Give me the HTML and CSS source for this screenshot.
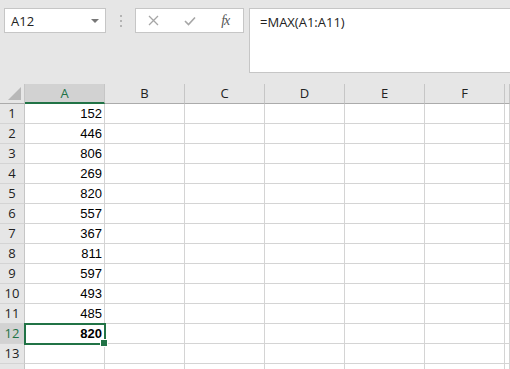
FILE: index.html
```html
<!DOCTYPE html>
<html lang="en">
<head>
    <meta charset="UTF-8">
    <meta name="viewport" content="width=device-width, initial-scale=1.0">
    <title>Book1 - Excel</title>
    <link rel="stylesheet" href="styles.css">
</head>
<body>

<div class="toolbar">
    <div class="namebox">
        <span>A12</span>
        <span class="caret"></span>
    </div>
    <div class="grip"><i></i><i></i><i></i></div>
    <div class="fxbox">
        <span class="fx-btn">
            <svg width="11" height="11" viewBox="0 0 11 11"><path d="M1 1L10 10M10 1L1 10" stroke="#a6a6a6" stroke-width="1.3" fill="none"/></svg>
        </span>
        <span class="fx-btn">
            <svg width="12" height="10" viewBox="0 0 12 10"><path d="M1 5L4.5 8.5L11 1.5" stroke="#a6a6a6" stroke-width="1.6" fill="none"/></svg>
        </span>
        <span class="fx-btn fx-label">fx</span>
    </div>
    <div class="formula">=MAX(A1:A11)</div>
</div>

<div class="sheet" id="sheet">
    <div class="corner">
        <svg width="13" height="13" viewBox="0 0 13 13"><path d="M13 0L13 13L0 13Z" fill="#b8b8b8"/></svg>
    </div>
    <div class="colhead active">A</div>
    <div class="colhead">B</div>
    <div class="colhead">C</div>
    <div class="colhead">D</div>
    <div class="colhead">E</div>
    <div class="colhead">F</div>
    <div class="colhead"></div>
</div>

<script>
    const values = [152, 446, 806, 269, 820, 557, 367, 811, 597, 493, 485, 820];
    const sheet = document.getElementById('sheet');

    // 13 numbered rows, plus the top sliver of the next one
    for (let r = 1; r <= 14; r++) {
        const head = document.createElement('div');
        head.className = 'rowhead' + (r === 12 ? ' active' : '');
        if (r <= 13) head.textContent = r;
        sheet.appendChild(head);

        for (let c = 0; c < 7; c++) {
            const cell = document.createElement('div');
            cell.className = 'cell';
            if (c === 0 && values[r - 1] !== undefined) {
                cell.textContent = values[r - 1];
            }
            if (c === 0 && r === 12) {
                cell.classList.add('selected');
            }
            sheet.appendChild(cell);
        }
    }
</script>

</body>
</html>
```

FILE: styles.css
```css
* {
    box-sizing: border-box;
}
body {
    margin: 0;
    background: #e6e6e6;
    font-family: 'Open Sans', 'Liberation Sans', sans-serif;
    overflow: hidden;
    width: 510px;
    height: 369px;
}
.toolbar {
    height: 84px;
    padding: 8px 0 0 4px;
    display: flex;
    align-items: flex-start;
}
.namebox {
    width: 102px;
    height: 25px;
    background: #fff;
    border: 1px solid #c6c6c6;
    display: flex;
    align-items: center;
    justify-content: space-between;
    padding: 0 6px 0 6px;
    font-size: 13px;
    color: #222;
}
.caret {
    width: 0;
    height: 0;
    border-left: 4px solid transparent;
    border-right: 4px solid transparent;
    border-top: 4px solid #777;
}
.grip {
    margin: 7px 13px 0 14px;
    display: flex;
    flex-direction: column;
    gap: 3px;
}
.grip i {
    display: block;
    width: 2px;
    height: 2px;
    background: #b4b4b4;
}
.fxbox {
    width: 109px;
    height: 25px;
    background: #fff;
    border: 1px solid #c6c6c6;
    display: flex;
    align-items: center;
}
.fx-btn {
    width: 36px;
    display: flex;
    justify-content: center;
    align-items: center;
}
.fx-label {
    font-family: 'Liberation Serif', serif;
    font-style: italic;
    font-size: 14px;
    color: #555;
    letter-spacing: -1px;
}
.formula {
    flex: 1;
    height: 65px;
    margin-left: 5px;
    background: #fff;
    border: 1px solid #c6c6c6;
    border-right: none;
    padding: 4px 10px;
    font-size: 13px;
    color: #222;
}
.sheet {
    display: grid;
    grid-template-columns: 25px repeat(6, 80px) 1fr;
    grid-auto-rows: 20px;
    background: #fff;
}
.corner {
    background: #e6e6e6;
    border-right: 1px solid #c6c6c6;
    border-bottom: 1px solid #ababab;
    display: flex;
    justify-content: flex-end;
    align-items: flex-end;
    padding: 0 3px 3px 0;
}
.colhead {
    background: #e6e6e6;
    border-right: 1px solid #c6c6c6;
    border-bottom: 1px solid #ababab;
    text-align: center;
    font-size: 13px;
    line-height: 19px;
    color: #222;
}
.colhead.active {
    background: #d2d2d2;
    color: #217346;
    border-bottom: 2px solid #217346;
}
.rowhead {
    background: #e6e6e6;
    border-right: 1px solid #c6c6c6;
    border-bottom: 1px solid #d4d4d4;
    text-align: center;
    font-size: 13px;
    line-height: 19px;
    color: #222;
}
.rowhead.active {
    background: #d2d2d2;
    color: #217346;
}
.cell {
    border-right: 1px solid #d4d4d4;
    border-bottom: 1px solid #d4d4d4;
    font-family: 'Liberation Sans', Arial, sans-serif;
    font-size: 13px;
    line-height: 20px;
    text-align: right;
    padding-right: 2px;
    color: #000;
}
.cell.selected {
    position: relative;
    font-weight: bold;
    outline: 2px solid #217346;
    outline-offset: -1px;
}
.cell.selected::after {
    content: '';
    position: absolute;
    right: -4px;
    bottom: -4px;
    width: 6px;
    height: 6px;
    background: #217346;
    border: 1px solid #fff;
}
```
